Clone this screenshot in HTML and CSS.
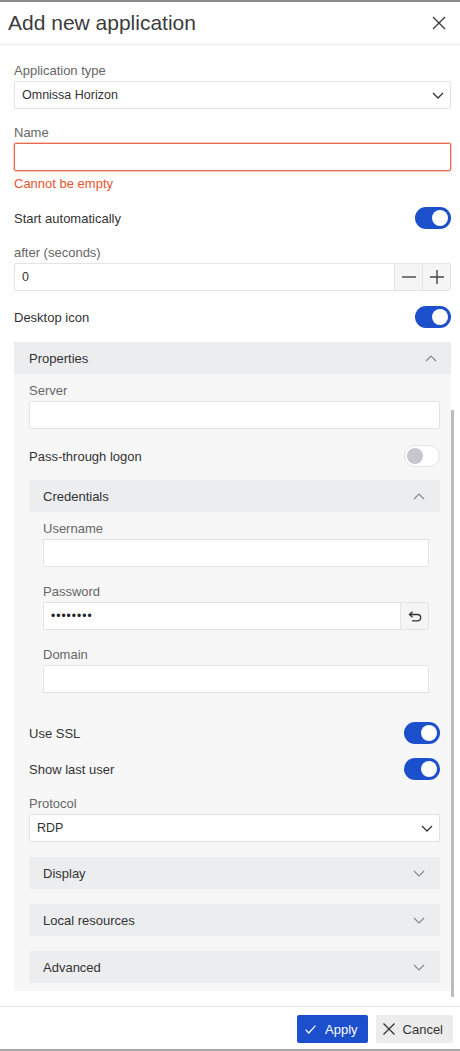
FILE: index.html
```html
<!DOCTYPE html>
<html lang="en">
<head>
    <meta charset="UTF-8">
    <meta name="viewport" content="width=device-width, initial-scale=1.0">
    <title>Add new application</title>
    <link rel="stylesheet" href="styles.css">
</head>
<body>
    <div class="dialog">
        <div class="dialog-header">
            <h2>Add new application</h2>
            <div class="close">
                <svg width="14" height="14" viewBox="0 0 14 14"><path d="M1 1L13 13M13 1L1 13" stroke="#3c3c3c" stroke-width="1.4" fill="none"/></svg>
            </div>
        </div>

        <div class="dialog-body">
            <div class="field">
                <label>Application type</label>
                <div class="select">
                    <span>Omnissa Horizon</span>
                    <svg class="chev" width="12" height="7" viewBox="0 0 12 7"><path d="M1 1L6 6L11 1" stroke="#333" stroke-width="1.3" fill="none"/></svg>
                </div>
            </div>

            <div class="field">
                <label>Name</label>
                <div class="input error"></div>
                <div class="error-text">Cannot be empty</div>
            </div>

            <div class="toggle-row">
                <span>Start automatically</span>
                <div class="switch"></div>
            </div>

            <div class="field">
                <label>after (seconds)</label>
                <div class="input-group">
                    <div class="value">0</div>
                    <div class="btn-square">
                        <svg width="14" height="14" viewBox="0 0 14 14"><path d="M0 7H14" stroke="#444" stroke-width="1.4"/></svg>
                    </div>
                    <div class="btn-square">
                        <svg width="14" height="14" viewBox="0 0 14 14"><path d="M0 7H14M7 0V14" stroke="#444" stroke-width="1.4"/></svg>
                    </div>
                </div>
            </div>

            <div class="toggle-row">
                <span>Desktop icon</span>
                <div class="switch"></div>
            </div>

            <!-- properties section -->
            <div class="panel">
                <div class="panel-header">
                    <span>Properties</span>
                    <svg width="12" height="7" viewBox="0 0 12 7"><path d="M1 6L6 1L11 6" stroke="#888" stroke-width="1.2" fill="none"/></svg>
                </div>
                <div class="panel-body">
                    <div class="field">
                        <label>Server</label>
                        <div class="input"></div>
                    </div>

                    <div class="toggle-row pass">
                        <span>Pass-through logon</span>
                        <div class="switch off"></div>
                    </div>

                    <div class="panel sub">
                        <div class="panel-header">
                            <span>Credentials</span>
                            <svg width="12" height="7" viewBox="0 0 12 7"><path d="M1 6L6 1L11 6" stroke="#888" stroke-width="1.2" fill="none"/></svg>
                        </div>
                        <div class="panel-body">
                            <div class="field">
                                <label>Username</label>
                                <div class="input"></div>
                            </div>
                            <div class="field">
                                <label>Password</label>
                                <div class="input-group">
                                    <div class="value dots">&bull;&bull;&bull;&bull;&bull;&bull;&bull;&bull;</div>
                                    <div class="btn-square">
                                        <svg width="14" height="11" viewBox="0 0 14 11"><path d="M4.5 0.8L1.5 3.5L4.5 6.2M1.5 3.5H9.5A3.2 3.2 0 0 1 9.5 9.9H4" stroke="#333" stroke-width="1.3" fill="none"/></svg>
                                    </div>
                                </div>
                            </div>
                            <div class="field">
                                <label>Domain</label>
                                <div class="input"></div>
                            </div>
                        </div>
                    </div>

                    <div class="toggle-row ssl">
                        <span>Use SSL</span>
                        <div class="switch"></div>
                    </div>

                    <div class="toggle-row last-user">
                        <span>Show last user</span>
                        <div class="switch"></div>
                    </div>

                    <div class="field">
                        <label>Protocol</label>
                        <div class="select">
                            <span>RDP</span>
                            <svg class="chev" width="12" height="7" viewBox="0 0 12 7"><path d="M1 1L6 6L11 1" stroke="#333" stroke-width="1.3" fill="none"/></svg>
                        </div>
                    </div>

                    <div class="panel-header closed">
                        <span>Display</span>
                        <svg width="12" height="7" viewBox="0 0 12 7"><path d="M1 1L6 6L11 1" stroke="#888" stroke-width="1.2" fill="none"/></svg>
                    </div>
                    <div class="panel-header closed">
                        <span>Local resources</span>
                        <svg width="12" height="7" viewBox="0 0 12 7"><path d="M1 1L6 6L11 1" stroke="#888" stroke-width="1.2" fill="none"/></svg>
                    </div>
                    <div class="panel-header closed">
                        <span>Advanced</span>
                        <svg width="12" height="7" viewBox="0 0 12 7"><path d="M1 1L6 6L11 1" stroke="#888" stroke-width="1.2" fill="none"/></svg>
                    </div>
                </div>
            </div>

            <div class="scroll-thumb"></div>
        </div>

        <div class="dialog-footer">
            <button class="btn primary">
                <svg width="11" height="9" viewBox="0 0 11 9"><path d="M0.6 4.6L3.8 8L10.4 0.6" stroke="#fff" stroke-width="1.2" fill="none"/></svg>
                Apply
            </button>
            <button class="btn">
                <svg width="12" height="12" viewBox="0 0 12 12"><path d="M0.5 0.5L11.5 11.5M11.5 0.5L0.5 11.5" stroke="#333" stroke-width="1.3" fill="none"/></svg>
                Cancel
            </button>
        </div>
    </div>
</body>
</html>
```

FILE: styles.css
```css
*{
    margin: 0;
    padding: 0;
    box-sizing: border-box;
}
body{
    font-family: "Liberation Sans", Arial, sans-serif;
    font-size: 13px;
    color: #333;
    background: #fff;
}
.dialog{
    height: 100vh;
    display: flex;
    flex-direction: column;
    border-top: 2px solid #8a8a8a;
    border-bottom: 2px solid #a8a8a8;
}
.dialog-header{
    height: 43px;
    flex: none;
    display: flex;
    justify-content: space-between;
    align-items: center;
    padding: 0 14px 0 8px;
    border-bottom: 1px solid #ebebeb;
}
.dialog-header h2{
    font-size: 21px;
    font-weight: 400;
    color: #3c3c3c;
}
.dialog-header .close{
    display: flex;
}
.dialog-body{
    position: relative;
    flex: 1;
    padding: 17px 9px 0 14px;
    overflow: hidden;
}
.scroll-thumb{
    position: absolute;
    top: 365px;
    right: 6px;
    width: 3px;
    height: 587px;
    background: #bcbcbc;
    border-radius: 1px;
}

/* form fields */
.field{
    margin-bottom: 15px;
}
.field label{
    display: block;
    height: 16px;
    line-height: 18px;
    margin-bottom: 3px;
    color: #666;
}
.input,
.select,
.input-group{
    height: 28px;
    background: #fff;
    border: 1px solid #e1e3e7;
    border-radius: 2px;
}
.select{
    display: flex;
    justify-content: space-between;
    align-items: center;
    padding: 0 6px 0 7px;
    font-size: 12.5px;
    color: #333;
}
.input.error{
    border-color: #ec6a4c;
    box-shadow: 0 0 0 1px rgba(236, 106, 76, .35);
}
.error-text{
    margin-top: 5px;
    height: 16px;
    line-height: 16px;
    color: #e8542f;
}
.input-group{
    display: flex;
    align-items: stretch;
}
.input-group .value{
    flex: 1;
    display: flex;
    align-items: center;
    padding-left: 7px;
    font-size: 12.5px;
}
.input-group .value.dots{
    font-size: 12px;
    letter-spacing: 1px;
    color: #222;
}
.btn-square{
    width: 28px;
    display: flex;
    justify-content: center;
    align-items: center;
    background: #f5f5f5;
    border-left: 1px solid #e1e3e7;
}

/* switches */
.toggle-row{
    height: 22px;
    display: flex;
    justify-content: space-between;
    align-items: center;
    margin-bottom: 15px;
    color: #333;
}
.switch{
    position: relative;
    width: 36px;
    height: 22px;
    border-radius: 11px;
    background: #1b4fcb;
}
.switch::after{
    content: '';
    position: absolute;
    top: 3px;
    right: 3px;
    width: 16px;
    height: 16px;
    border-radius: 50%;
    background: #fff;
}
.switch.off{
    background: #fff;
    border: 1px solid #e2e3e6;
}
.switch.off::after{
    top: 2px;
    left: 2px;
    right: auto;
    background: #c5c7cc;
}

/* collapsible panels */
.panel{
    margin-top: -1px;
    background: #f7f7f7;
}
.panel-header{
    height: 32px;
    display: flex;
    justify-content: space-between;
    align-items: center;
    padding: 0 14px 0 15px;
    background: #ecedef;
    color: #333;
}
.panel-header svg{
    display: block;
}
.panel-body{
    padding: 8px 11px 8px 15px;
}
.panel-body .toggle-row.pass{
    margin-top: 16px;
    margin-bottom: 13px;
}
.panel-body .toggle-row.ssl{
    margin-top: 22px;
    margin-bottom: 14px;
}
.panel-body .toggle-row.last-user{
    margin-bottom: 15px;
}
.panel.sub{
    margin-top: 0;
}
.panel.sub .panel-header{
    padding: 0 15px 0 14px;
}
.panel.sub .panel-body{
    padding: 8px 11px 7px 14px;
}
.panel.sub .field{
    margin-bottom: 16px;
}
.panel.sub .field:last-child{
    margin-bottom: 0;
}
.panel-header.closed{
    margin-bottom: 15px;
    padding: 0 15px 0 14px;
}
.panel-header.closed:last-child{
    margin-bottom: 0;
}

/* footer */
.dialog-footer{
    flex: none;
    height: 43px;
    display: flex;
    justify-content: flex-end;
    align-items: flex-start;
    gap: 8px;
    padding: 8px 7px 0 0;
    border-top: 1px solid #e4e4e4;
}
.btn{
    height: 28px;
    display: flex;
    align-items: center;
    gap: 8px;
    padding: 0 10px 0 7px;
    border: none;
    border-radius: 2px;
    background: #ececec;
    color: #333;
    font-family: inherit;
    font-size: 13px;
}
.btn.primary{
    background: #1b4fcb;
    color: #fff;
    gap: 9px;
    padding: 0 10px 0 8px;
}
```
